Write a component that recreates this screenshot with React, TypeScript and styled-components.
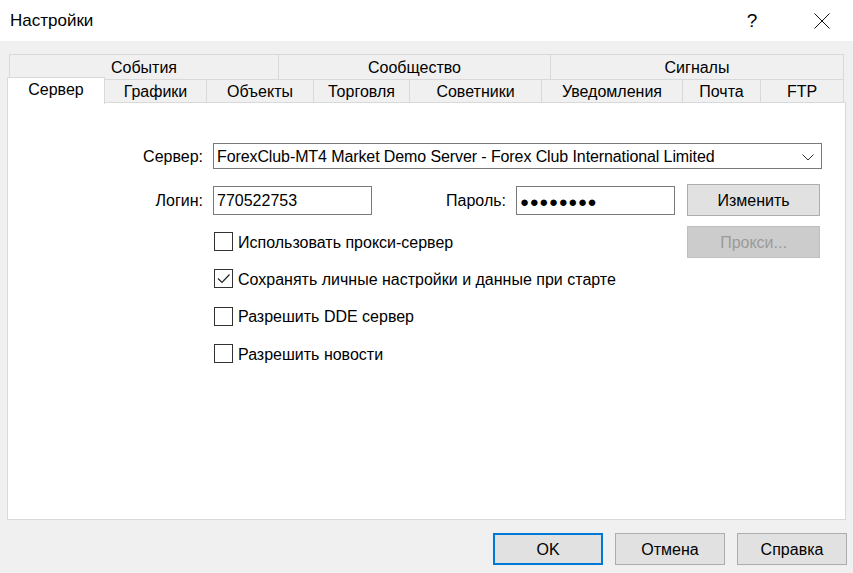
import React from 'react';
import styled, { createGlobalStyle } from 'styled-components';

const Global = createGlobalStyle`
  html, body {
    margin: 0;
    padding: 0;
    background: #f0f0f0;
  }
  body {
    font-family: "Liberation Sans", Arial, sans-serif;
    color: #000;
  }
`;

const Window = styled.div`
  width: 853px;
  height: 573px;
  display: flex;
  flex-direction: column;
  background: #f0f0f0;
  overflow: hidden;
`;

const TitleBar = styled.div`
  height: 41px;
  background: #fff;
  display: flex;
  align-items: center;
  padding-left: 10px;
  font-size: 17px;
`;

const Title = styled.div`
  flex: 1;
`;

const HelpMark = styled.div`
  width: 20px;
  font-size: 19px;
  text-align: center;
  margin-right: 52px;
`;

const CloseBox = styled.div`
  width: 16px;
  height: 16px;
  margin-right: 23px;
  display: flex;
`;

const Body = styled.div`
  padding: 13px 7px 0 7px;
  display: flex;
  flex-direction: column;
`;

const TopRow = styled.div`
  display: flex;
  height: 25px;
  margin: 0 3px 0 2px;
`;

const TopTab = styled.div<{ $w: number }>`
  width: ${p => p.$w}px;
  box-sizing: border-box;
  border: 1px solid #d9d9d9;
  border-bottom: none;
  margin-right: -1px;
  display: flex;
  align-items: center;
  justify-content: center;
  padding-top: 1px;
  font-size: 16px;
`;

const BottomRow = styled.div`
  display: flex;
  height: 24px;
  align-items: flex-end;
  position: relative;
  z-index: 1;
  margin-bottom: -1px;
`;

const Tab = styled.div<{ $w: number; $active?: boolean }>`
  width: ${p => p.$w}px;
  box-sizing: border-box;
  height: ${p => (p.$active ? 27 : 24)}px;
  border: 1px solid #d9d9d9;
  border-bottom: ${p => (p.$active ? 'none' : '1px solid #d9d9d9')};
  background: ${p => (p.$active ? '#fff' : '#f0f0f0')};
  margin-right: -1px;
  margin-bottom: ${p => (p.$active ? -1 : 0)}px;
  display: flex;
  align-items: center;
  justify-content: center;
  padding-bottom: ${p => (p.$active ? 2 : 0)}px;
  padding-top: ${p => (p.$active ? 0 : 2)}px;
  font-size: 16px;
`;

const Panel = styled.div`
  height: 418px;
  box-sizing: border-box;
  background: #fff;
  border: 1px solid #d9d9d9;
  padding: 40px 0 0 0;
  display: flex;
  flex-direction: column;
`;

const Row = styled.div<{ $h: number; $mt?: number }>`
  display: flex;
  align-items: center;
  height: ${p => p.$h}px;
  margin-top: ${p => p.$mt ?? 0}px;
`;

const Label = styled.div<{ $w: number }>`
  width: ${p => p.$w}px;
  text-align: right;
  margin-right: 10px;
  padding-top: 2px;
  font-size: 16px;
`;

const Field = styled.div<{ $w: number; $h: number }>`
  width: ${p => p.$w}px;
  height: ${p => p.$h}px;
  box-sizing: border-box;
  border: 1px solid #7a7a7a;
  display: flex;
  align-items: center;
  padding: 2px 0 0 3px;
  font-size: 16px;
  background: #fff;
`;

const ComboText = styled.div`
  flex: 1;
  white-space: nowrap;
  letter-spacing: -0.1px;
`;

const Chevron = styled.div`
  width: 12px;
  margin-right: 7px;
  display: flex;
`;

const Dots = styled.div`
  font-size: 15px;
  letter-spacing: 0.6px;
`;

const Button = styled.div<{ $disabled?: boolean; $focus?: boolean; $w: number }>`
  width: ${p => p.$w}px;
  height: 32px;
  box-sizing: border-box;
  background: ${p => (p.$disabled ? '#cccccc' : '#e1e1e1')};
  border: ${p => (p.$focus ? '2px solid #0078d7' : p.$disabled ? '1px solid #bfbfbf' : '1px solid #adadad')};
  color: ${p => (p.$disabled ? '#9a9a9a' : '#000')};
  display: flex;
  align-items: center;
  justify-content: center;
  padding-top: 2px;
  font-size: 16px;
`;

const Check = styled.div`
  display: flex;
  align-items: center;
  flex: 1;
  margin-left: 206px;
`;

const Box = styled.div`
  width: 19px;
  height: 19px;
  box-sizing: border-box;
  border: 1px solid #333;
  background: #fff;
  margin-right: 5px;
  display: flex;
  align-items: center;
  justify-content: center;
`;

const CheckText = styled.div`
  font-size: 16px;
  padding-top: 2px;
`;

const Footer = styled.div`
  display: flex;
  justify-content: flex-end;
  gap: 12px;
  margin-top: 13px;
  margin-right: -1px;
`;

const Spacer = styled.div`
  width: 12px;
`;

const RightGap = styled.div`
  width: 25px;
`;

const Checkbox: React.FC<{ checked?: boolean; label: string }> = ({ checked, label }) => (
  <Check>
    <Box>
      {checked && (
        <svg width="15" height="15" viewBox="0 0 15 15">
          <polyline points="2,7.5 6,11.5 13.5,3.5" fill="none" stroke="#222" strokeWidth="1.2" />
        </svg>
      )}
    </Box>
    <CheckText>{label}</CheckText>
  </Check>
);

export default function App() {
  return (
    <>
      <Global />
      <Window>
        <TitleBar>
          <Title>Настройки</Title>
          <HelpMark>?</HelpMark>
          <CloseBox>
            <svg width="16" height="16" viewBox="0 0 16 16">
              <path d="M0.5 0.5 L15.5 15.5 M15.5 0.5 L0.5 15.5" stroke="#111" strokeWidth="1" />
            </svg>
          </CloseBox>
        </TitleBar>
        <Body>
          <TopRow>
            <TopTab $w={270}>События</TopTab>
            <TopTab $w={273}>Сообщество</TopTab>
            <TopTab $w={294}>Сигналы</TopTab>
          </TopRow>
          <BottomRow>
            <Tab $w={98} $active>Сервер</Tab>
            <Tab $w={103}>Графики</Tab>
            <Tab $w={108}>Объекты</Tab>
            <Tab $w={97}>Торговля</Tab>
            <Tab $w={133}>Советники</Tab>
            <Tab $w={142}>Уведомления</Tab>
            <Tab $w={79}>Почта</Tab>
            <Tab $w={84}>FTP</Tab>
          </BottomRow>
          <Panel>
            <Row $h={26}>
              <Label $w={195}>Сервер:</Label>
              <Field $w={609} $h={26}>
                <ComboText>ForexClub-MT4 Market Demo Server - Forex Club International Limited</ComboText>
                <Chevron>
                  <svg width="12" height="7" viewBox="0 0 12 7">
                    <polyline points="0.5,0.5 6,6 11.5,0.5" fill="none" stroke="#333" strokeWidth="1" />
                  </svg>
                </Chevron>
              </Field>
            </Row>
            <Row $h={32} $mt={15}>
              <Label $w={195}>Логин:</Label>
              <Field $w={159} $h={29}>770522753</Field>
              <Label $w={134}>Пароль:</Label>
              <Field $w={159} $h={29}>
                <Dots>●●●●●●●●</Dots>
              </Field>
              <Spacer />
              <Button $w={133}>Изменить</Button>
            </Row>
            <Row $h={37} $mt={7}>
              <Checkbox label="Использовать прокси-сервер" />
              <Button $w={133} $disabled>Прокси...</Button>
              <RightGap />
            </Row>
            <Row $h={37}>
              <Checkbox checked label="Сохранять личные настройки и данные при старте" />
            </Row>
            <Row $h={38}>
              <Checkbox label="Разрешить DDE сервер" />
            </Row>
            <Row $h={37}>
              <Checkbox label="Разрешить новости" />
            </Row>
          </Panel>
          <Footer>
            <Button $w={110} $focus>OK</Button>
            <Button $w={110}>Отмена</Button>
            <Button $w={110}>Справка</Button>
          </Footer>
        </Body>
      </Window>
    </>
  );
}
